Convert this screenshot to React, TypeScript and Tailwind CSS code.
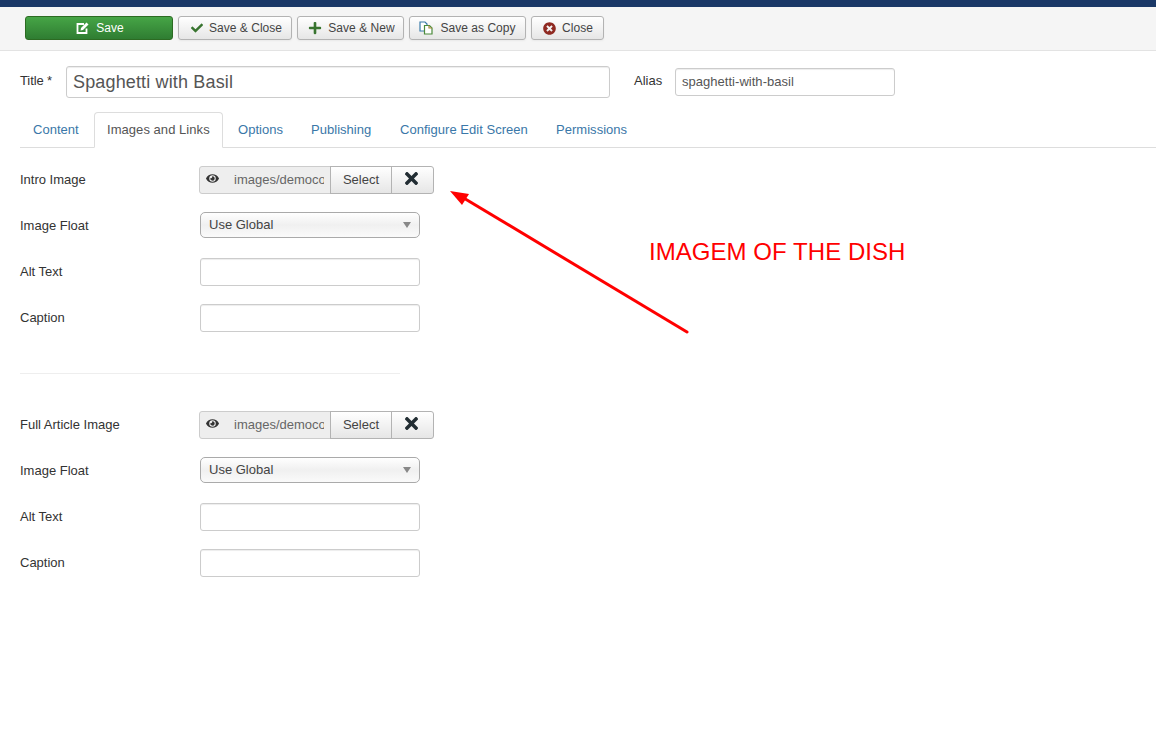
import React from "react";
import { FaCheck, FaPlus, FaTimesCircle, FaEye, FaTimes } from "react-icons/fa";

function EditIcon() {
  return (
    <svg width="13" height="12" viewBox="0 0 13 12" fill="none">
      <path d="M8 2H1.5v9H10.5V6.5" stroke="#fff" strokeWidth="1.8" />
      <path d="M4.5 8.5 5 6l5.5-5.5 2 2L7 8z" fill="#fff" />
    </svg>
  );
}

function CopyIcon() {
  return (
    <svg width="14" height="14" viewBox="0 0 14 14" fill="none" strokeWidth="1.2">
      <path d="M1 1h5l2 2v7H1z" fill="#fff" stroke="#3a7ba8" />
      <path d="M5.5 4.5h5l2.5 2.5v6H5.5z" fill="#fff" stroke="#4a8a3a" />
      <path d="M10 4.5V7h3" stroke="#a88a3a" />
    </svg>
  );
}

function ToolBtn({ w, icon, label }: { w: string; icon: React.ReactNode; label: string }) {
  return (
    <button className={`${w} h-6 flex items-center justify-center rounded-[3px] border border-[#b3b3b3] bg-gradient-to-b from-white to-[#e6e6e6] text-[12px] tracking-[0.03px] text-[#444] shadow-[0_1px_2px_rgba(0,0,0,0.05)]`}>
      {icon}
      <span>{label}</span>
    </button>
  );
}

function Field({ label, children, mb = "mb-[18px]", lift = "" }: { label: string; children: React.ReactNode; mb?: string; lift?: string }) {
  return (
    <div className={`flex items-center ${mb}`}>
      <div className={`w-[179px] text-[13px] text-[#333] ${lift}`}>{label}</div>
      {children}
    </div>
  );
}

function TextBox() {
  return <div className="ml-px w-[220px] h-7 rounded-[3px] border border-[#ccc] bg-white shadow-[inset_0_1px_1px_rgba(0,0,0,0.075)]" />;
}

function MediaRow({ label }: { label: string }) {
  return (
    <Field label={label}>
      <div className="flex h-7 w-[235px] text-[13px]">
        <div className="w-[29px] flex items-center justify-center pb-[4px] pr-[2px] rounded-l-[3px] border border-[#ccc] bg-[#eee] text-[#333]">
          <FaEye size={13} />
        </div>
        <div className="w-[103px] -ml-px flex items-center pl-[7px] border-y border-[#ccc] bg-[#eee] text-[#666] overflow-hidden whitespace-nowrap">
          <span className="w-[90px] overflow-hidden">images/democontent</span>
        </div>
        <button className="w-[62px] flex items-center justify-center border border-[#b3b3b3] bg-gradient-to-b from-white to-[#e6e6e6] text-[#444]">Select</button>
        <button className="w-[43px] -ml-px flex items-center justify-center pb-[4px] pr-[2px] rounded-r-[3px] border border-[#b3b3b3] bg-gradient-to-b from-white to-[#e6e6e6] text-[#222d33]">
          <FaTimes size={19} />
        </button>
      </div>
    </Field>
  );
}

function SelectBox() {
  return (
    <div className="ml-px w-[220px] h-[26px] flex items-center justify-between pl-2 pr-[8px] rounded-[5px] border border-[#aaa] bg-gradient-to-b from-white via-[#f0f0f0] to-[#fafafa] text-[13px] text-[#444]">
      <span>Use Global</span>
      <span className="w-0 h-0 border-x-[4px] border-x-transparent border-t-[6px] border-t-[#888]" />
    </div>
  );
}

function ImageGroup({ label }: { label: string }) {
  return (
    <div>
      <MediaRow label={label} />
      <Field label="Image Float" mb="mb-5" lift="mt-[2px]"><SelectBox /></Field>
      <Field label="Alt Text"><TextBox /></Field>
      <Field label="Caption"><TextBox /></Field>
    </div>
  );
}

export default function App() {
  const tab = "pt-[8px] pl-[15px] text-[13px] tracking-[0.03px] text-[#3a77a8]";
  return (
    <div className="relative w-[1156px] h-[745px] overflow-hidden bg-white font-['Liberation_Sans',Arial,sans-serif]">
      <div className="h-[7px] bg-[#1a3867]" />
      <div className="h-[44px] flex items-center gap-[5px] pl-[25px] pt-px pb-[2px] bg-[#f5f5f5] border-b border-[#e3e3e3]">
        <button className="w-[148px] h-6 flex items-center justify-center gap-[7px] pl-[2px] rounded-[3px] border border-[#2c6b22] bg-gradient-to-b from-[#46a546] to-[#2f7d32] text-[12px] tracking-[0.03px] text-white">
          <EditIcon />
          <span>Save</span>
        </button>
        <ToolBtn w="w-[114px] gap-[6px] pl-[3px]" icon={<FaCheck size={12} className="text-[#38742f]" />} label="Save & Close" />
        <ToolBtn w="w-[107px] gap-[6px] pl-[2px]" icon={<FaPlus size={14} className="text-[#38742f]" />} label="Save & New" />
        <ToolBtn w="w-[117px] gap-[7px]" icon={<CopyIcon />} label="Save as Copy" />
        <ToolBtn w="w-[73px] gap-[6px] pl-px" icon={<FaTimesCircle size={13} className="text-[#8f2a22]" />} label="Close" />
      </div>

      <div className="flex items-center pl-5 pt-[15px] h-[62px] pb-[15px]">
        <div className="w-[46px] text-[13px] tracking-[-0.1px] text-[#333] -mt-[2px]">Title *</div>
        <div className="w-[544px] h-8 flex items-center pl-[6px] rounded-[3px] border border-[#ccc] text-[18px] tracking-[0.15px] text-[#555] shadow-[inset_0_1px_1px_rgba(0,0,0,0.075)]">Spaghetti with Basil</div>
        <div className="ml-6 w-[41px] text-[13px] text-[#333] -mt-[2px]">Alias</div>
        <div className="w-[220px] h-7 flex items-center pl-[6px] rounded-[3px] border border-[#ccc] text-[13px] tracking-[0.03px] text-[#555] shadow-[inset_0_1px_1px_rgba(0,0,0,0.075)]">spaghetti-with-basil</div>
      </div>

      <div className="flex h-[36px] ml-5 -mt-px border-b border-[#ddd]">
        <div className="w-[74px] pt-[8px] pl-[13px] text-[13px] tracking-[0.03px] text-[#3a77a8]">Content</div>
        <div className="w-[129px] h-[36px] pl-[12px] pt-[7px] -mb-px rounded-t-[4px] border border-[#ddd] border-b-white bg-white text-[13px] tracking-[0.05px] text-[#555]">Images and Links</div>
        <div className={`${tab} w-[73px]`}>Options</div>
        <div className={`${tab} w-[89px]`}>Publishing</div>
        <div className={`${tab} w-[156px]`}>Configure Edit Screen</div>
        <div className={tab}>Permissions</div>
      </div>

      <div className="pl-5 pt-[18px]">
        <ImageGroup label="Intro Image" />
        <div className="w-[380px] h-px bg-[#eee] mt-[41px] mb-[37px]" />
        <ImageGroup label="Full Article Image" />
      </div>

      <div className="absolute left-[649px] top-[238px] text-[24px] tracking-[0.05px] leading-[28px] text-[#ff0000]">IMAGEM OF THE DISH</div>
      <svg className="absolute left-[440px] top-[180px]" width="270" height="160" viewBox="0 0 270 160">
        <line x1="247" y1="152" x2="22" y2="17" stroke="#ff0000" strokeWidth="3" strokeLinecap="round" />
        <path d="M10 11 L29 14 L22 25 Z" fill="#ff0000" />
      </svg>
    </div>
  );
}
